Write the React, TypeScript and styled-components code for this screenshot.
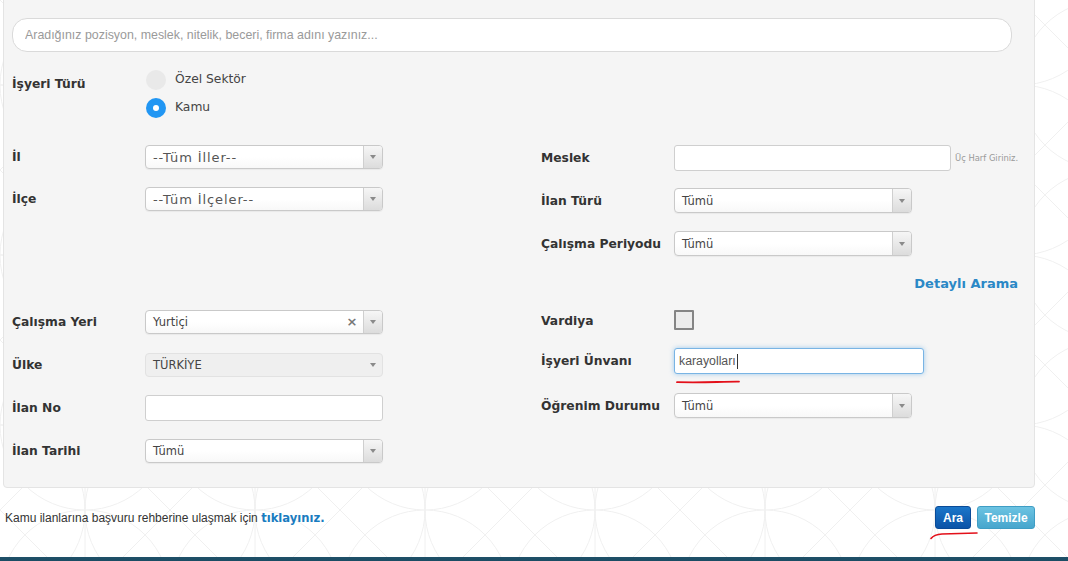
import React from "react";
import styled, { createGlobalStyle, css } from "styled-components";

const GlobalStyle = createGlobalStyle`
  html, body { margin: 0; padding: 0; background: #fff; }
  body { font-family: "DejaVu Sans", Verdana, sans-serif; color: #333; overflow: hidden; }
  * { box-sizing: border-box; }
`;

const Page = styled.div`
  position: relative;
  width: 1068px;
  height: 561px;
  overflow: hidden;
  background: #fff;
`;

const Backdrop = styled.svg`
  position: absolute;
  inset: 0;
  width: 100%;
  height: 100%;
  z-index: 0;
`;

const Content = styled.div`
  position: relative;
  z-index: 1;
  padding: 0 33px 0 3px;
`;

const Panel = styled.section`
  margin-top: -10px;
  padding: 27px 16px 15px 8px;
  background: #f5f5f5;
  border: 1px solid #e4e4e4;
  border-radius: 4px;
`;

const SearchInput = styled.input`
  display: block;
  width: 1000px;
  height: 34px;
  padding: 0 12px;
  border: 1px solid #dadada;
  border-radius: 15px;
  background: #fff;
  font: 12.4px "Liberation Sans", Arial, sans-serif;
  color: #555;
  outline: none;
  &::placeholder { color: #9a9a9a; }
`;

const TypeRow = styled.div`
  display: flex;
  margin-top: 18px;
`;

const Label = styled.span<{ $drop?: number }>`
  flex-shrink: 0;
  width: 133px;
  font-size: 12.3px;
  font-weight: bold;
  line-height: 20px;
  color: #333;
  margin-top: ${(p) => p.$drop ?? 0}px;
`;

const TypeLabel = styled(Label)`
  margin-top: 4px;
`;

const RadioGroup = styled.div`
  display: flex;
  flex-direction: column;
  gap: 8px;
  margin-left: 1px;
`;

const RadioOption = styled.label`
  display: flex;
  align-items: center;
  gap: 9px;
  height: 20px;
`;

const RadioDot = styled.span<{ $checked?: boolean }>`
  position: relative;
  width: 20px;
  height: 20px;
  border-radius: 50%;
  background: ${(p) => (p.$checked ? "#2196f3" : "#e9e9e9")};
  ${(p) =>
    p.$checked &&
    css`
      &::after {
        content: "";
        position: absolute;
        left: 7px;
        top: 7px;
        width: 6px;
        height: 6px;
        border-radius: 50%;
        background: #fff;
      }
    `}
`;

const RadioText = styled.span`
  font-size: 12.3px;
  color: #444;
  margin-top: -2px;
`;

const Columns = styled.div<{ $top?: number }>`
  display: grid;
  grid-template-columns: 529px 1fr;
  margin-top: ${(p) => p.$top ?? 0}px;
`;

const Column = styled.div`
  display: flex;
  flex-direction: column;
`;

const Field = styled.div<{ $h: number }>`
  display: flex;
  align-items: center;
  height: ${(p) => p.$h}px;
`;

const SelectBox = styled.div<{ $w: number; $h: number; $disabled?: boolean }>`
  display: flex;
  align-items: stretch;
  width: ${(p) => p.$w}px;
  height: ${(p) => p.$h}px;
  border: 1px solid #c9c9c9;
  border-radius: 4px;
  background: linear-gradient(#ffffff 50%, #f8f8f8);
  box-shadow: 0 1px 1px rgba(0, 0, 0, 0.05);
  ${(p) =>
    p.$disabled &&
    css`
      background: #efefef;
      border-color: #e2e2e2;
      box-shadow: none;
    `}
`;

const SelectValue = styled.span<{ $wide?: boolean }>`
  flex: 1;
  display: flex;
  align-items: center;
  padding-left: 7px;
  font-size: 11.5px;
  color: #444;
  white-space: nowrap;
  ${(p) =>
    p.$wide &&
    css`
      font-size: 13px;
      letter-spacing: 0.9px;
      color: #555;
    `}
`;

const ClearMark = styled.span`
  display: flex;
  align-items: center;
  justify-content: center;
  width: 14px;
  margin-right: 4px;
  font-size: 13px;
  font-weight: bold;
  color: #777;
`;

const ArrowBox = styled.span<{ $plain?: boolean }>`
  display: flex;
  align-items: center;
  justify-content: center;
  width: 19px;
  border-left: 1px solid #cfcfcf;
  border-radius: 0 3px 3px 0;
  background: linear-gradient(#f6f6f6, #dcdcdc);
  &::after {
    content: "";
    border-left: 3px solid transparent;
    border-right: 3px solid transparent;
    border-top: 4px solid #8a8a8a;
  }
  ${(p) =>
    p.$plain &&
    css`
      border-left: none;
      background: transparent;
    `}
`;

const TextInput = styled.div<{ $w: number; $focused?: boolean }>`
  position: relative;
  display: flex;
  align-items: center;
  width: ${(p) => p.$w}px;
  height: 26px;
  padding-left: 4px;
  border: 1px solid #cfcfcf;
  border-radius: 3px;
  background: #fff;
  font: 12.3px "Liberation Sans", Arial, sans-serif;
  color: #555;
  ${(p) =>
    p.$focused &&
    css`
      border-color: #79b4e4;
      box-shadow: 0 0 5px rgba(102, 175, 233, 0.6);
    `}
`;

const Caret = styled.span`
  display: inline-block;
  width: 1px;
  height: 15px;
  margin-left: 1px;
  background: #333;
`;

const Hint = styled.span`
  margin-left: 4px;
  font-size: 8.4px;
  color: #999;
  white-space: nowrap;
`;

const Checkbox = styled.span`
  display: block;
  width: 20px;
  height: 20px;
  margin-top: -1px;
  border: 2px solid #858585;
  border-radius: 1px;
  background: #ececec;
`;

const DetailRow = styled.div`
  display: flex;
  justify-content: flex-end;
  align-items: center;
  height: 35px;
  padding-top: 2px;
`;

const DetailLink = styled.a`
  font-size: 13px;
  font-weight: bold;
  color: #2a88c6;
  text-decoration: none;
`;

const Scribble = styled.svg`
  position: absolute;
  overflow: visible;
`;

const UnderScribble = styled(Scribble)`
  left: 2px;
  top: 31px;
  width: 62px;
  height: 4px;
`;

const ButtonScribble = styled(Scribble)`
  left: -6px;
  top: 24px;
  width: 48px;
  height: 8px;
`;

const ActionBar = styled.div`
  display: flex;
  align-items: center;
  justify-content: space-between;
  height: 23px;
  margin-top: 18px;
  padding-left: 2px;
`;

const Note = styled.p`
  margin: 0;
  font: 12px "Liberation Sans", Arial, sans-serif;
  color: #333;
`;

const NoteLink = styled.a`
  font-family: "DejaVu Sans", Verdana, sans-serif;
  font-weight: bold;
  font-size: 11.6px;
  color: #1a7cc0;
  text-decoration: none;
`;

const ButtonGroup = styled.div`
  display: flex;
  gap: 6px;
`;

const Button = styled.button<{ $variant: "primary" | "info"; $w: number }>`
  position: relative;
  width: ${(p) => p.$w}px;
  height: 23px;
  padding: 0;
  border-radius: 3px;
  font: bold 12px "Liberation Sans", Arial, sans-serif;
  color: #fff;
  cursor: pointer;
  ${(p) =>
    p.$variant === "primary"
      ? css`
          background: linear-gradient(#1b76c9, #0b53a7);
          border: 1px solid #0a4b98;
        `
      : css`
          background: linear-gradient(#6cc3e2, #47a6cd);
          border: 1px solid #3f9dc4;
        `}
`;

const FooterBar = styled.div`
  position: relative;
  z-index: 1;
  height: 10px;
  margin-top: 28px;
  background: linear-gradient(#1f5068, #16465e);
`;

type SelectProps = {
  w: number;
  h: number;
  value: string;
  clearable?: boolean;
  disabled?: boolean;
  wide?: boolean;
};

function Select({ w, h, value, clearable, disabled, wide }: SelectProps) {
  return (
    <SelectBox $w={w} $h={h} $disabled={disabled}>
      <SelectValue $wide={wide}>{value}</SelectValue>
      {clearable && <ClearMark>×</ClearMark>}
      <ArrowBox $plain={disabled} />
    </SelectBox>
  );
}

export default function App() {
  return (
    <Page>
      <GlobalStyle />
      <Backdrop aria-hidden="true">
        <defs>
          <pattern id="geo" width="170" height="170" patternUnits="userSpaceOnUse">
            <g fill="none" stroke="#f0f0f0" strokeWidth="1">
              <circle cx="0" cy="0" r="85" />
              <circle cx="170" cy="0" r="85" />
              <circle cx="0" cy="170" r="85" />
              <circle cx="170" cy="170" r="85" />
              <circle cx="85" cy="85" r="85" />
              <path d="M0 0 L170 170 M170 0 L0 170 M85 0 L85 170" />
            </g>
          </pattern>
        </defs>
        <rect width="100%" height="100%" fill="url(#geo)" />
      </Backdrop>
      <Content>
        <Panel>
          <SearchInput placeholder="Aradığınız pozisyon, meslek, nitelik, beceri, firma adını yazınız..." />
          <TypeRow>
            <TypeLabel>İşyeri Türü</TypeLabel>
            <RadioGroup>
              <RadioOption>
                <RadioDot />
                <RadioText>Özel Sektör</RadioText>
              </RadioOption>
              <RadioOption>
                <RadioDot $checked />
                <RadioText>Kamu</RadioText>
              </RadioOption>
            </RadioGroup>
          </TypeRow>

          <Columns $top={18}>
            <Column>
              <Field $h={42}>
                <Label>İl</Label>
                <Select w={238} h={24} value="--Tüm İller--" wide />
              </Field>
              <Field $h={42}>
                <Label>İlçe</Label>
                <Select w={238} h={24} value="--Tüm İlçeler--" wide />
              </Field>
            </Column>
            <Column>
              <Field $h={43}>
                <Label>Meslek</Label>
                <TextInput $w={277} />
                <Hint>Üç Harf Giriniz.</Hint>
              </Field>
              <Field $h={43}>
                <Label>İlan Türü</Label>
                <Select w={238} h={25} value="Tümü" />
              </Field>
              <Field $h={43}>
                <Label>Çalışma Periyodu</Label>
                <Select w={238} h={25} value="Tümü" />
              </Field>
            </Column>
          </Columns>

          <DetailRow>
            <DetailLink href="#">Detaylı Arama</DetailLink>
          </DetailRow>

          <Columns>
            <Column>
              <Field $h={43}>
                <Label>Çalışma Yeri</Label>
                <Select w={238} h={24} value="Yurtiçi" clearable />
              </Field>
              <Field $h={43}>
                <Label>Ülke</Label>
                <Select w={238} h={24} value="TÜRKİYE" disabled />
              </Field>
              <Field $h={43}>
                <Label>İlan No</Label>
                <TextInput $w={238} />
              </Field>
              <Field $h={43}>
                <Label>İlan Tarihi</Label>
                <Select w={238} h={24} value="Tümü" />
              </Field>
            </Column>
            <Column>
              <Field $h={40}>
                <Label $drop={2}>Vardiya</Label>
                <Checkbox />
              </Field>
              <Field $h={42}>
                <Label>İşyeri Ünvanı</Label>
                <TextInput $w={250} $focused>
                  karayolları
                  <Caret />
                  <UnderScribble viewBox="0 0 62 4">
                    <path d="M0 2.2 Q20 2.6 40 2 T62 1.6" stroke="#e3101a" strokeWidth="1.8" fill="none" strokeLinecap="round" />
                  </UnderScribble>
                </TextInput>
              </Field>
              <Field $h={47}>
                <Label>Öğrenim Durumu</Label>
                <Select w={238} h={25} value="Tümü" />
              </Field>
            </Column>
          </Columns>
        </Panel>

        <ActionBar>
          <Note>
            Kamu ilanlarına başvuru rehberine ulaşmak için <NoteLink href="#">tıklayınız.</NoteLink>
          </Note>
          <ButtonGroup>
            <Button $variant="primary" $w={36}>
              Ara
              <ButtonScribble viewBox="0 0 48 8">
                <path d="M1 7.5 Q4 3.5 12 3 L47 2" stroke="#e3101a" strokeWidth="1.6" fill="none" strokeLinecap="round" />
              </ButtonScribble>
            </Button>
            <Button $variant="info" $w={58}>
              Temizle
            </Button>
          </ButtonGroup>
        </ActionBar>
      </Content>
      <FooterBar />
    </Page>
  );
}
